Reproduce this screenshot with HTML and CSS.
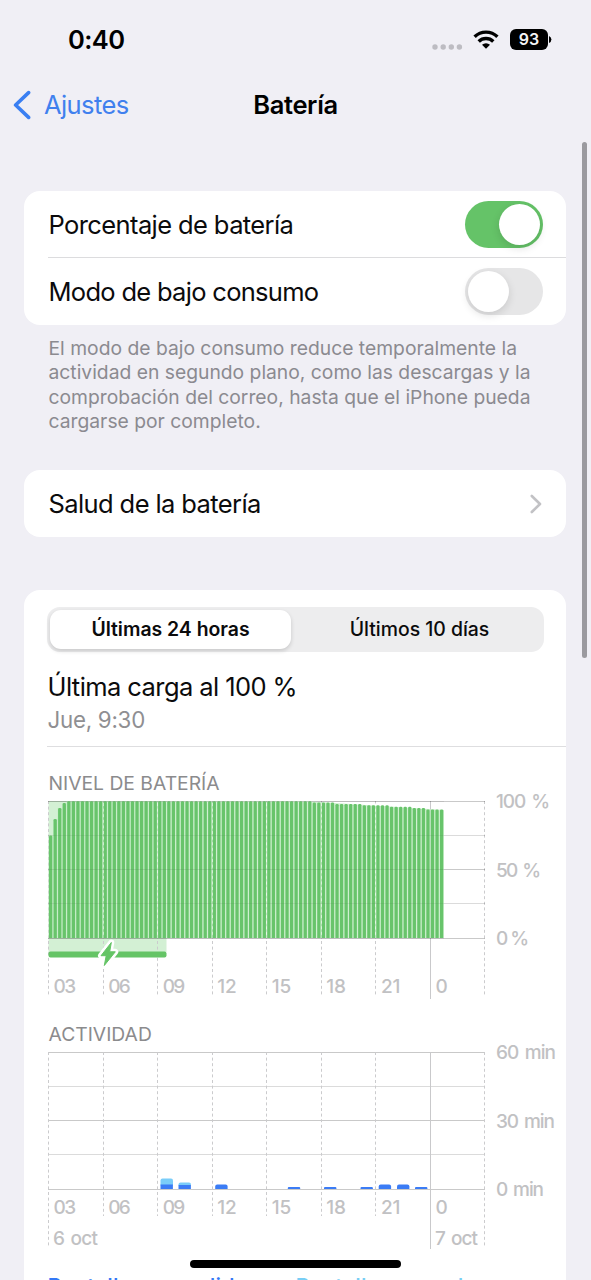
FILE: index.html
```html
<!DOCTYPE html>
<html lang="es">
<head>
<meta charset="utf-8">
<title>Batería</title>
<link rel="stylesheet" href="styles.css">
</head>
<body>
<div class="phone">
  <header class="status">
    <span class="time">0:40</span>
    <div class="indicators">
      <svg class="dots" width="31" height="6" viewBox="0 0 31 6"><g fill="#bdbcc2"><circle cx="3" cy="3" r="2.7"/><circle cx="11.2" cy="3" r="2.7"/><circle cx="19.3" cy="3" r="2.7"/><circle cx="27.4" cy="3" r="2.7"/></g></svg>
      <svg class="wifi" width="26" height="19" viewBox="0 0 26 19"><g fill="none" stroke="#000" stroke-width="3.4"><path d="M1.600 6.800A16.300 16.300 0 0 1 24.400 6.800"/><path d="M5.700 11.500A10.500 10.500 0 0 1 20.300 11.500"/></g><path d="M9 14.800a5.900 5.900 0 0 1 8 0L13 18.800z"/></svg>
      <span class="battery">93</span><svg class="tip" width="3" height="7" viewBox="0 0 3 7"><path d="M0 0Q2.400 1 2.400 3.500T0 7z"/></svg>
    </div>
  </header>
  <nav class="nav">
    <a class="back"><svg width="18" height="30" viewBox="0 0 18 30"><path d="M15.600 2.600L2.600 15l13 12.400" fill="none" stroke="#3a7ff2" stroke-width="3.600" stroke-linecap="round" stroke-linejoin="round"/></svg><span>Ajustes</span></a>
    <h1 class="title">Batería</h1>
  </nav>

  <main class="content">
    <section class="card">
      <div class="row"><span>Porcentaje de batería</span><span class="switch on"><i class="knob"></i></span></div>
      <div class="row divided"><span class="low-power">Modo de bajo consumo</span><span class="switch"><i class="knob"></i></span></div>
    </section>
    <p class="note">El modo de bajo consumo reduce temporalmente la<br>actividad en segundo plano, como las descargas y la<br>comprobación del correo, hasta que el iPhone pueda<br>cargarse por completo.</p>

    <section class="card health">
      <div class="row"><span>Salud de la batería</span><svg class="chev" width="12" height="20" viewBox="0 0 12 20"><path d="M1.800 2L10 10l-8.200 8" fill="none" stroke="#c2c2c5" stroke-width="2.600" stroke-linecap="round" stroke-linejoin="round"/></svg></div>
    </section>

    <section class="card usage">
      <div class="segments"><span class="seg active">Últimas 24 horas</span><span class="seg">Últimos 10 días</span></div>
      <h2 class="charge">Última carga al 100 %</h2>
      <p class="when">Jue, 9:30</p>
      <hr class="rule">
      <h3 class="chart-title level-title">NIVEL DE BATERÍA</h3>
      <svg class="chart" id="level" width="542" height="210" viewBox="24 795 542 210"></svg>
      <h3 class="chart-title activity-title">ACTIVIDAD</h3>
      <svg class="chart" id="activity" width="542" height="210" viewBox="24 1046 542 210"></svg>
      <div class="legend"><span class="lg-on">Pantalla encendida</span><span class="lg-off">Pantalla apagada</span></div>
    </section>
  </main>
  <div class="scrollbar"></div>
  <div class="home"></div>
</div>
<script src="charts.js"></script>
</body>
</html>
```

FILE: styles.css
```css
* { box-sizing: border-box; }
body { margin: 0; font-family: Inter, "Liberation Sans", sans-serif; color: #0b0b0c; background: #f0eff5; }
h1, h2, h3, p { margin: 0; font-weight: 400; }
.phone { position: relative; width: 591px; height: 1280px; overflow: hidden; background: #f0eff5; }

.status { display: flex; justify-content: space-between; height: 79px; padding: 0 39px 0 68px; align-items: center; }
.time { font-size: 25.5px; font-weight: 600; letter-spacing: -0.6px; color: #000; }
.indicators { display: flex; align-items: center; }
.dots { margin: 14px 10px 0 0; }
.wifi { margin-right: 11px; }
.battery { width: 38px; height: 21px; border-radius: 6px; background: #000; color: #f4f4f6; font-size: 16px; font-weight: 600; line-height: 21px; text-align: center; }
.tip { margin-left: 1px; }

.nav { position: relative; display: flex; align-items: center; justify-content: center; height: 50px; }
.back { position: absolute; left: 13px; top: 9px; display: flex; align-items: center; gap: 13px; height: 32px; color: #4080ee; font-size: 25.5px; letter-spacing: -0.6px; }
.back svg { position: relative; top: 1px; }
.title { font-size: 25.5px; font-weight: 600; letter-spacing: -0.35px; color: #000; }

.content { padding: 62px 25px 0 24px; }
.card { background: #fff; border-radius: 16px; }
.row { display: flex; align-items: center; justify-content: space-between; height: 67px; padding: 0 23.5px 0 24.5px; font-size: 25.5px; letter-spacing: -0.6px; }
.low-power { letter-spacing: -0.7px; }
.divided { position: relative; }
.divided::before { content: ""; position: absolute; left: 24px; right: 0; top: -1px; height: 1px; background: #dcdcde; }
.switch { width: 77.5px; height: 47px; padding: 3px; border-radius: 24px; background: #e6e6e7; display: flex; }
.switch.on { background: #65c368; justify-content: flex-end; }
.knob { width: 41px; height: 41px; border-radius: 50%; background: #fff; box-shadow: 0 3px 8px rgba(0,0,0,.13); }
.note { padding: 11px 0 0 24.5px; height: 145px; font-size: 19.3px; line-height: 24.3px; white-space: nowrap; color: #8b8a90; }
.chev { margin-right: 1px; }
.health { margin-bottom: 53px; }

.usage { height: 760px; padding-top: 17px; overflow: hidden; }
.segments { display: flex; height: 45px; margin: 0 22px 0 23px; padding: 3px; border-radius: 13px; background: #ededee; }
.seg { flex: 1; padding-left: 7px; text-align: center; line-height: 39px; font-size: 19.4px; font-weight: 500; }
.seg.active { flex: 0 0 241px; padding: 0; height: 39px; border-radius: 11px; background: #fff; font-weight: 600; box-shadow: 0 2px 4px rgba(0,0,0,.16); }
.charge { margin: 19px 0 0 23.5px; font-size: 25.5px; line-height: 32px; letter-spacing: -0.58px; }
.when { margin-left: 23.5px; height: 43px; font-size: 22.3px; line-height: 34px; letter-spacing: -0.25px; color: #8f8f92; }
.rule { border: 0; height: 1px; margin: 0 0 0 23px; background: #dedee0; }
.chart-title { margin-left: 24.5px; font-size: 19.3px; line-height: 25px; color: #8b8b8d; }
.level-title { padding-top: 24px; height: 48px; }
.chart { display: block; overflow: visible; font-size: 19px; font-weight: 450; word-spacing: 2px; fill: #c1c1c3; }
.activity-title { padding-top: 17px; height: 41px; }
.legend { display: grid; grid-template-columns: 248px 1fr; padding: 16px 0 0 23.5px; font-size: 22px; line-height: 28px; font-weight: 500; }
.lg-on { color: #3478f6; }
.lg-off { color: #78cef5; }

.scrollbar { position: absolute; left: 582px; top: 142px; width: 5px; height: 516px; border-radius: 3px; background: #9b9a9f; }
.home { position: absolute; left: 190px; top: 1260px; width: 211px; height: 8px; border-radius: 4px; background: #000; }
```

FILE: charts.js
```javascript
const NS = "http://www.w3.org/2000/svg";
const LEFT = 48.6, STEP = 54.55, RIGHT = 485;
const hours = ["03", "06", "09", "12", "15", "18", "21", "0"];

function add(svg, tag, attrs, text) {
  const el = document.createElementNS(NS, tag);
  for (const k in attrs) el.setAttribute(k, attrs[k]);
  if (text) el.textContent = text;
  svg.appendChild(el);
}
function line(svg, x1, y1, x2, y2, stroke, dash) {
  add(svg, "line", { x1, y1, x2, y2, stroke, "stroke-dasharray": dash || "none" });
}
function label(svg, x, y, text, width) {
  add(svg, "text", { x, y, textLength: width }, text);
}
function rows(svg, top, to, strength) {
  for (let i = 0; i < 5; i++) {
    const y = Math.round(top + i * 34.15) + 0.5;
    line(svg, 48, y, to, y, `rgba(0,0,0,${(i % 2 ? 0.14 : 0.21) * strength})`);
  }
}
function columnX(i) {
  return i === 8 ? 484.5 : Math.floor(LEFT + i * STEP) + 0.5;
}
function columns(svg, top, end, edgeEnd) {
  for (let i = 0; i < 9; i++) {
    const x = columnX(i);
    const edge = i === 0 || i === 8;
    if (i === 7) line(svg, x, top, x, edgeEnd + 3, "#c9c9cb");
    else line(svg, x, top, x, edge ? edgeEnd : end, "#cbcbcd", "3 2.6");
  }
}
function hourLabels(svg, y) {
  hours.forEach((h, i) => {
    const width = h === "0" ? 11 : h[0] === "0" ? 22.5 : 19.5;
    label(svg, LEFT + i * STEP + 5, y, h, width);
  });
}

const level = document.getElementById("level");
add(level, "rect", { x: 48.5, y: 801, width: 118, height: 151, fill: "#d3f0d4" });
columns(level, 801, 996, 996);
hourLabels(level, 993);
rows(level, 801, RIGHT, 1);
const values = [75, 87, 95, 98.6];
[[58, 100], [63, 99], [69, 98], [75, 97], [80, 96], [83, 95], [87, 94]].forEach(([end, v]) => {
  while (values.length < end) values.push(v);
});
add(level, "path", { d: "M48.5 938V835h4.500V819h4.500V808h4.500V803h4.500V801.500H312L444 810V938z", fill: "#c4ecc5", "fill-opacity": 0.8 });
values.forEach((v, i) => {
  const x = LEFT + 0.4 + i * 4.546, y = 938 - v * 1.368;
  add(level, "path", { d: `M${x} 938V${y + 1.3}q0-1.300 1.300-1.300h.7q1.300 0 1.300 1.300V938z`, fill: "#68c46b" });
});
rows(level, 801, 444, 0.3);
for (let i = 1; i < 7; i++) {
  line(level, columnX(i), 803, columnX(i), 937, "rgba(255,255,255,.5)", "3 2.6");
}
add(level, "rect", { x: 48.5, y: 951.5, width: 118, height: 6, rx: 2, fill: "#65c466" });
add(level, "path", { d: "M111.300 942.500L101 955.700h5.200L104.300 965.500 115.300 951.800h-5.600z", fill: "#65c466", stroke: "#65c466", "stroke-width": 1, "stroke-linejoin": "round", class: "bolt" });
const bolt = level.querySelector(".bolt");
const halo = bolt.cloneNode();
halo.setAttribute("stroke", "#fff");
halo.setAttribute("stroke-width", 6);
level.insertBefore(halo, bolt);
label(level, 496, 808, "100 %", 54);
label(level, 496, 876.5, "50 %", 45);
label(level, 496, 945, "0 %", 33);

const activity = document.getElementById("activity");
rows(activity, 1052, RIGHT, 1);
columns(activity, 1052, 1216, 1246);
hourLabels(activity, 1214);
[[160.5, 1178.5, 7], [178.5, 1182.5, 3]].forEach(([x, y, h]) => {
  add(activity, "path", { d: `M${x} ${y + h}V${y + 2}q0-2 2-2h8.500q2 0 2 2V${y + h}z`, fill: "#7acdf9" });
});
[[160.5, 4.5, 0], [178.5, 4, 0], [215.2, 4.5, 2], [287.8, 2, 1], [324, 2, 1], [360.5, 2, 1], [378.7, 4.5, 2], [397, 4.5, 2], [415, 2, 1]].forEach(([x, h, r]) => {
  const y = 1189 - h;
  add(activity, "path", { d: `M${x} 1189V${y + r}q0-${r} ${r}-${r}h${12.4 - 2 * r}q${r} 0 ${r} ${r}V1189z`, fill: "#3b7cf5" });
});
label(activity, 496, 1059, "60 min", 60);
label(activity, 496, 1127.5, "30 min", 59);
label(activity, 496, 1196, "0 min", 48);
label(activity, 53, 1245, "6 oct", 45);
label(activity, 435, 1245, "7 oct", 43);
```
